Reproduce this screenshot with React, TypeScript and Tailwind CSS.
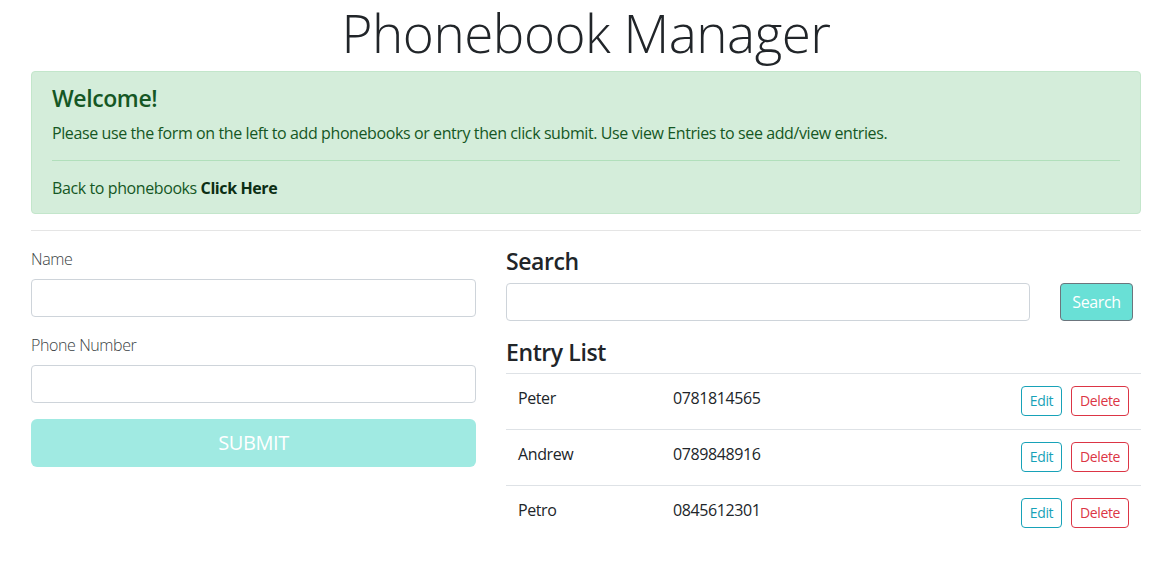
const entries = [
  { name: "Peter", phone: "0781814565" },
  { name: "Andrew", phone: "0789848916" },
  { name: "Petro", phone: "0845612301" },
];

export default function App() {
  return (
    <div className="min-h-screen bg-white pl-[31px] pr-[21px] font-['Open_Sans',sans-serif] text-[16px] leading-6 tracking-[-0.4px] text-[#212529]">
      <h1 className="mb-[6px] text-center text-[53px] font-light leading-[65px] tracking-[-0.5px]">Phonebook Manager</h1>

      <div className="rounded border border-[#c3e6cb] bg-[#d4edda] px-5 pb-[13px] pt-3 text-[#155724]">
        <h4 className="mb-2 text-[23px] font-semibold leading-[29px]">Welcome!</h4>
        <p>
          Please use the form on the left to add phonebooks or entry then click submit. Use view Entries to see add/view
          entries.
        </p>
        <hr className="my-[15px] border-t border-[#b1dfbb]" />
        <p>
          Back to phonebooks <b className="font-bold text-[#0b2e13]">Click Here</b>
        </p>
      </div>

      <hr className="mb-4 mt-4 border-t border-black/10" />

      <div className="flex gap-[30px]">
        <div className="w-[445px]">
          <label className="mb-2 block font-light text-[#3a3f44]">Name</label>
          <input className="mb-4 block h-[38px] w-full rounded border border-[#ced4da] px-3" />
          <label className="mb-2 block font-light text-[#3a3f44]">Phone Number</label>
          <input className="mb-4 block h-[38px] w-full rounded border border-[#ced4da] px-3" />
          <button className="block h-12 w-full rounded-md bg-[#a0eae2] text-[20px] text-white">SUBMIT</button>
        </div>

        <div className="flex-1">
          <h4 className="mb-[7px] text-[23px] font-semibold leading-[29px]">Search</h4>
          <div className="flex items-center pr-2">
            <input className="h-[38px] flex-1 rounded border border-[#ced4da] px-3" />
            <button className="ml-[30px] h-[38px] w-[73px] rounded border border-[#6c757d] bg-[#69e0d6] text-white">
              Search
            </button>
          </div>
          <h4 className="mb-[6px] mt-[17px] text-[23px] font-semibold leading-[29px]">Entry List</h4>
          <div>
            {entries.map((e) => (
              <div key={e.name} className="flex h-14 border-t border-[#dee2e6] px-3 pt-3">
                <div className="w-[155px]">{e.name}</div>
                <div className="flex-1">{e.phone}</div>
                <div className="flex gap-[9px]">
                  <button className="h-[30px] w-[41px] rounded border border-[#17a2b8] text-[14px] text-[#17a2b8]">
                    Edit
                  </button>
                  <button className="h-[30px] w-[58px] rounded border border-[#dc3545] text-[14px] text-[#dc3545]">
                    Delete
                  </button>
                </div>
              </div>
            ))}
          </div>
        </div>
      </div>
    </div>
  );
}
